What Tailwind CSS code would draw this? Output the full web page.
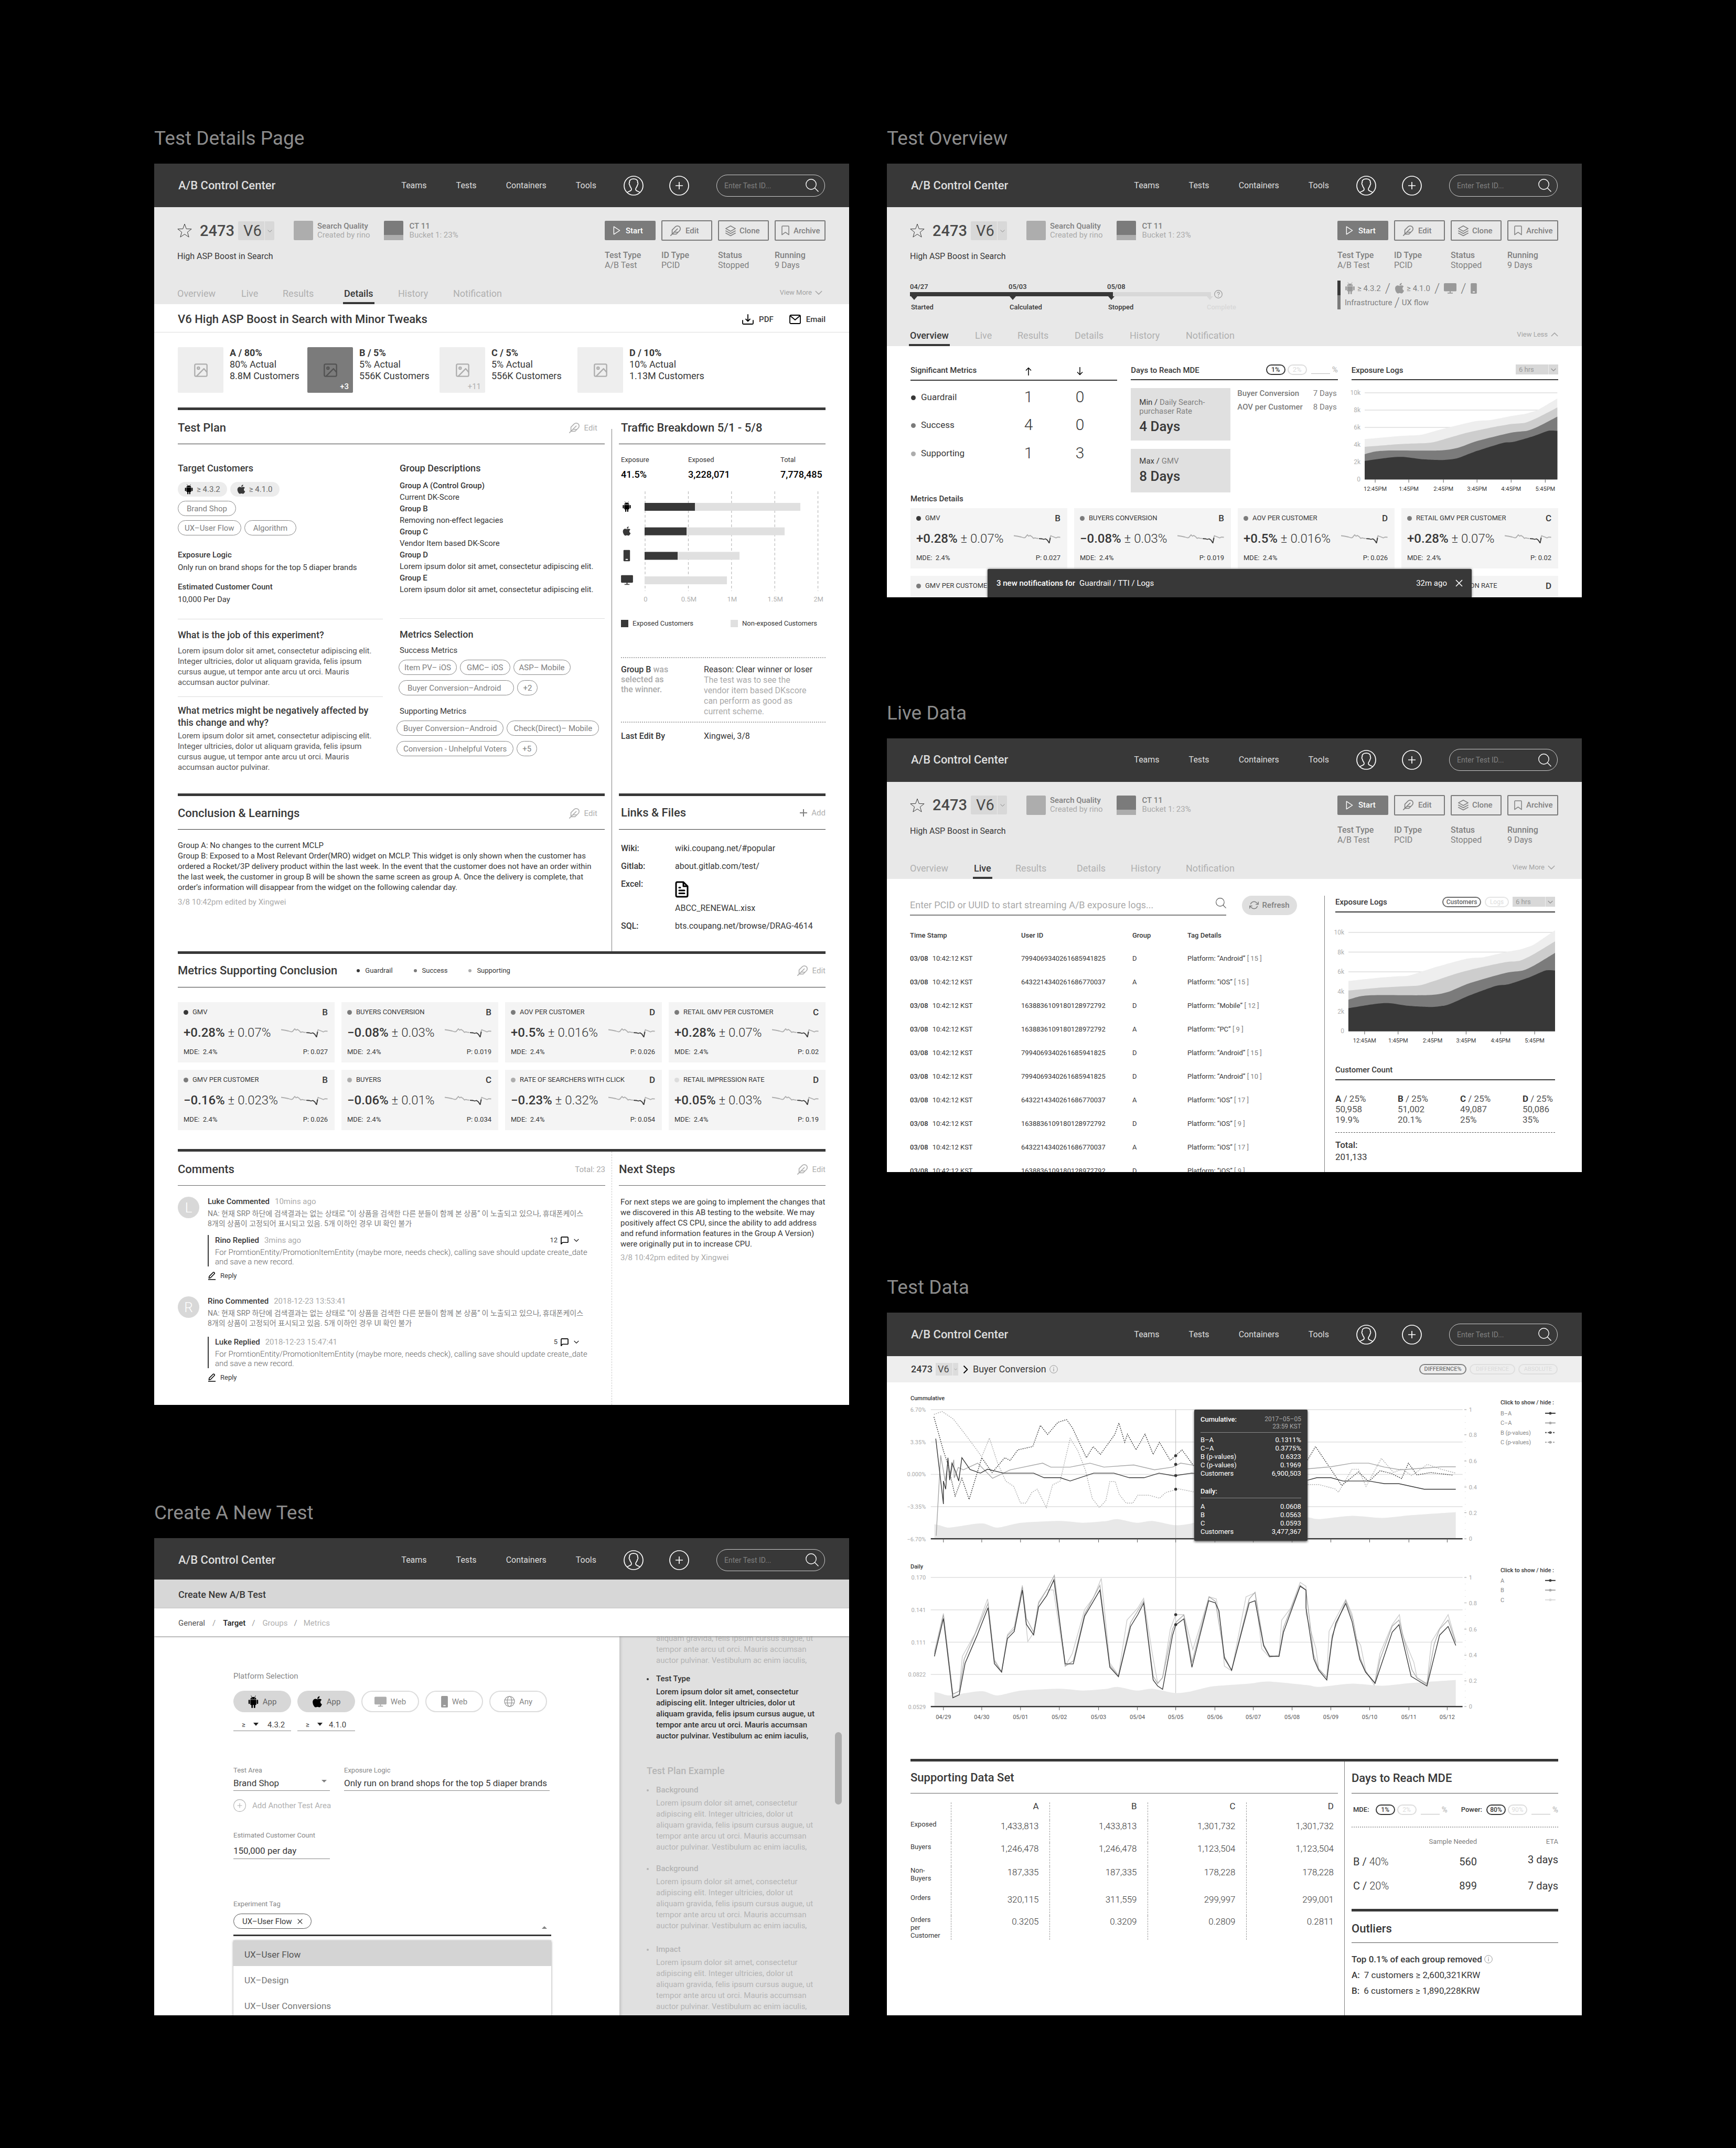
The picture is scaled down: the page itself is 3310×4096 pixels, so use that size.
<!DOCTYPE html>
<html lang="en">
<head>
<meta charset="utf-8">
<meta name="viewport" content="width=device-width, initial-scale=1">
<title>A/B Control Center – screens</title>
<script src="https://cdn.jsdelivr.net/npm/@tailwindcss/browser@4"></script>
</head>
<body class="min-h-screen bg-black font-['Roboto','Noto_Sans_CJK_KR',sans-serif] text-[#383838] text-[15px] leading-5">

<!-- Icon sprite -->
<svg class="hidden" aria-hidden="true">
  <symbol id="i-user" viewBox="0 0 38 38"><g fill="none" stroke="currentColor" stroke-width="1.7"><circle cx="19" cy="19" r="18"/><path d="M6.500 32.200C8.500 30 13.800 29.600 14.800 27.200c.4-1.200.1-2.800-.5-3.700C12.600 21.300 11.800 19.400 11.500 17.500c-1.300-.8-1.200-4-.3-4.200C10.600 8.200 14 6.200 19 6.200s8.400 2 7.800 7.100c.9.2 1 3.400-.3 4.200-.3 1.900-1.100 3.800-2.800 6-.6.9-.9 2.500-.5 3.700 1 2.400 6.300 2.800 8.300 5"/></g></symbol>
  <symbol id="i-plus-circle" viewBox="0 0 38 38"><g fill="none" stroke="currentColor" stroke-width="1.7"><circle cx="19" cy="19" r="18"/><path d="M19 12v14M12 19h14"/></g></symbol>
  <symbol id="i-search" viewBox="0 0 25 25"><g fill="none" stroke="currentColor" stroke-width="1.400"><circle cx="10.500" cy="10.500" r="9.700"/><path d="M17.500 17.500l7 7"/></g></symbol>
  <symbol id="i-star" viewBox="0 0 28 27"><path fill="none" stroke="currentColor" stroke-width="1" d="M14 1.200l3.300 9.200 9.800.3-7.700 6 2.700 9.400L14 20.600l-8.100 5.500 2.700-9.400-7.700-6 9.800-.3z"/></symbol>
  <symbol id="i-chevron" viewBox="0 0 16 9"><path fill="none" stroke="currentColor" stroke-width="1.800" d="M1 1l7 7 7-7"/></symbol>
  <symbol id="i-play" viewBox="0 0 14 18"><path fill="none" stroke="currentColor" stroke-width="1.500" stroke-linejoin="round" d="M1 1.200v15.600L13 9z"/></symbol>
  <symbol id="i-feather" viewBox="0 0 24 24"><path fill="none" stroke="currentColor" stroke-width="1.800" stroke-linecap="round" stroke-linejoin="round" d="M20.240 12.240a6 6 0 0 0-8.490-8.490L5 10.500V19h8.500zM16 8L2 22M17.500 15H9"/></symbol>
  <symbol id="i-layers" viewBox="0 0 24 24"><path fill="none" stroke="currentColor" stroke-width="1.800" stroke-linejoin="round" stroke-linecap="round" d="M12 2L2 7.500 12 13l10-5.500zM2 12.300l10 5.400 10-5.400M2 17l10 5.400L22 17"/></symbol>
  <symbol id="i-bookmark" viewBox="0 0 16 20"><path fill="none" stroke="currentColor" stroke-width="1.600" stroke-linejoin="round" d="M1 18.700V2.500A1.500 1.500 0 0 1 2.500 1h11A1.500 1.500 0 0 1 15 2.500v16.200l-7-5z"/></symbol>
  <symbol id="i-download" viewBox="0 0 22 20"><path fill="none" stroke="currentColor" stroke-width="1.800" stroke-linecap="round" stroke-linejoin="round" d="M1 12v5.500A1.500 1.500 0 0 0 2.500 19h17a1.500 1.500 0 0 0 1.500-1.500V12M11 1v12M7 9.500l4 4 4-4"/></symbol>
  <symbol id="i-mail" viewBox="0 0 22 18"><g fill="none" stroke="currentColor" stroke-width="1.800" stroke-linejoin="round"><rect x="1" y="1" width="20" height="16" rx="2"/><path d="M1.500 2L11 10l9.500-8"/></g></symbol>
  <symbol id="i-image" viewBox="0 0 24 24"><g fill="none" stroke="currentColor" stroke-width="2" stroke-linejoin="round"><rect x="2" y="2" width="20" height="20" rx="2"/><circle cx="8" cy="8.500" r="1.800"/><path d="M22 15.500l-5-6L5 21.800"/></g></symbol>
  <symbol id="i-android" viewBox="0 0 20 24"><g fill="currentColor"><path d="M4.300 7.500C4.500 4.900 6.700 2.900 10 2.900s5.500 2 5.700 4.600z"/><path d="M5.600.3l1.600 3M14.400.3l-1.600 3" stroke="currentColor" stroke-width=".8" fill="none"/><path d="M4.300 8.300h11.400v8.700a1.200 1.200 0 0 1-1.200 1.200h-9A1.200 1.200 0 0 1 4.300 17z"/><rect x=".8" y="8.300" width="2.700" height="8" rx="1.300"/><rect x="16.500" y="8.300" width="2.700" height="8" rx="1.300"/><rect x="6.300" y="16" width="2.800" height="8" rx="1.300"/><rect x="10.900" y="16" width="2.800" height="8" rx="1.300"/></g><circle cx="7.500" cy="5.300" r=".55" fill="#fff"/><circle cx="12.500" cy="5.300" r=".55" fill="#fff"/></symbol>
  <symbol id="i-apple" viewBox="0 0 384 512"><path fill="currentColor" d="M318.700 268.700c-.2-36.700 16.400-64.400 50-84.800-18.800-26.900-47.200-41.700-84.700-44.600-35.500-2.800-74.300 20.700-88.500 20.700-15 0-49.400-19.700-76.400-19.700C63.300 141.200 4 184.800 4 273.500q0 39.300 14.400 81.200c12.800 36.700 59 126.700 107.200 125.200 25.200-.6 43-17.900 75.800-17.900 31.800 0 48.300 17.900 76.400 17.900 48.600-.7 90.400-82.500 102.600-119.300-65.200-30.700-61.700-90-61.700-91.900zm-56.600-164.200c27.300-32.400 24.800-61.900 24-72.500-24.100 1.400-52 16.400-67.900 34.900-17.500 19.800-27.800 44.300-25.600 71.900 26.100 2 49.900-11.400 69.500-34.300z"/></symbol>
  <symbol id="i-phone" viewBox="0 0 14 24"><rect width="14" height="24" rx="2" fill="currentColor"/><rect x="4.500" y="19" width="5" height="2" rx=".6" fill="#fff"/></symbol>
  <symbol id="i-monitor" viewBox="0 0 24 20"><g fill="currentColor"><rect width="24" height="15.500" rx="1.800"/><rect x="11" y="15" width="2" height="3.500"/><rect x="7" y="18" width="10" height="1.800"/></g></symbol>
  <symbol id="i-globe" viewBox="0 0 22 22"><g fill="none" stroke="currentColor" stroke-width="1.400"><circle cx="11" cy="11" r="10"/><ellipse cx="11" cy="11" rx="4.500" ry="10"/><path d="M1.500 8h19M1.500 14h19"/></g></symbol>
  <symbol id="i-file" viewBox="0 0 26 32"><path fill="none" stroke="currentColor" stroke-width="3" stroke-linejoin="round" stroke-linecap="round" d="M16 2H4.500A2.500 2.500 0 0 0 2 4.500v23A2.500 2.500 0 0 0 4.500 30h17a2.500 2.500 0 0 0 2.500-2.500V10zM16 2v8h8M8 12.500h2M8 18h10M8 23.500h10"/></symbol>
  <symbol id="i-plus" viewBox="0 0 14 14"><path stroke="currentColor" stroke-width="2" d="M7 0v14M0 7h14"/></symbol>
  <symbol id="i-chat" viewBox="0 0 16 16"><path fill="none" stroke="currentColor" stroke-width="1.800" stroke-linejoin="round" d="M1 15V2.200A1.200 1.200 0 0 1 2.200 1h11.600A1.200 1.200 0 0 1 15 2.200v8.600a1.200 1.200 0 0 1-1.200 1.200H4z"/></symbol>
  <symbol id="i-pencil" viewBox="0 0 16 17"><path fill="none" stroke="currentColor" stroke-width="1.600" stroke-linejoin="round" d="M2 13l.6-3.600L10.400 1.500a1.500 1.500 0 0 1 2.100 0l.6.6a1.500 1.500 0 0 1 0 2.100L5.300 12.200zM.5 16h15"/></symbol>
  <symbol id="i-refresh" viewBox="0 0 24 24"><path fill="none" stroke="currentColor" stroke-width="2" stroke-linecap="round" stroke-linejoin="round" d="M23 4v6h-6M1 20v-6h6M3.510 9a9 9 0 0 1 14.850-3.360L23 10M1 14l4.640 4.360A9 9 0 0 0 20.490 15"/></symbol>
  <symbol id="i-up" viewBox="0 0 12 16"><path fill="none" stroke="currentColor" stroke-width="1.500" d="M6 16V1.500M1 6.500l5-5 5 5"/></symbol>
  <symbol id="i-close" viewBox="0 0 14 14"><path stroke="currentColor" stroke-width="1.600" d="M1 1l12 12M13 1L1 13"/></symbol>
  <symbol id="i-info" viewBox="0 0 16 16"><circle cx="8" cy="8" r="7.300" fill="none" stroke="currentColor"/><path stroke="currentColor" stroke-width="1.200" d="M8 6.500v5.500M8 3.700v1.500"/></symbol>
  <symbol id="i-help" viewBox="0 0 16 16"><circle cx="8" cy="8" r="7.300" fill="none" stroke="currentColor" stroke-width="1.200"/><path fill="none" stroke="currentColor" stroke-width="1.300" d="M5.800 6.200C5.800 3.400 10.300 3.500 10.200 6.200 10.200 7.800 8 7.800 8 9.600M8 11v1.500"/></symbol>
  <symbol id="i-spark" viewBox="0 0 89 18"><g fill="none" stroke-linejoin="round"><path stroke="#adadad" stroke-width="1.800" d="M0 3.500l7 1 7 1.500 5 1.500 2.500-.3L26 1.800l2.500 2.700 2.500-1.500 4 2.800 2.500 2.800 2.500-1 3 .8 4 .5M68 11L70.500 3.500l2 1 4 1.500 4 1.800 3-1.600 5 .3"/><path stroke="#383838" stroke-width="1.800" d="M48 9.200l6 .3 3 1 3.500-1 3.500 2.500 3.500 5.500 2.200-10"/></g></symbol>
</svg>

<main class="grid min-h-screen grid-cols-2 gap-[72px] px-[294px] pt-[244px] pb-[253px]">

  <div class="flex flex-col justify-between">

    <!-- ============ Test details ============ -->
    <section class="flex flex-col gap-7">
      <h2 class="text-[37px] leading-10 text-[#8c8c8c]">Test Details Page</h2>
      <article class="bg-white">
        <div data-header></div>
        <div data-toolbar="Details"></div>

        <div class="flex h-[54px] items-center justify-between border-b border-[#dcdcdc] px-[45px] pt-1">
          <h3 class="text-[22px] font-medium">V6 High ASP Boost in Search with Minor Tweaks</h3>
          <div class="flex gap-[30px] font-medium">
            <a href="#pdf" class="flex items-center gap-2.5"><svg class="h-5 w-[22px] text-black"><use href="#i-download"/></svg>PDF</a>
            <a href="#email" class="flex items-center gap-2.5"><svg class="h-[18px] w-[22px] text-black"><use href="#i-mail"/></svg>Email</a>
          </div>
        </div>

        <div class="px-[45px]">
          <ul class="grid grid-cols-[247px_252px_263px_auto] py-7 text-[18px] leading-[22px]">
            <li class="flex gap-3"><span class="flex size-[87px] items-center justify-center rounded-xs bg-[#eeeeee]"><svg class="size-7 text-[#adadad]"><use href="#i-image"/></svg></span><div><b>A / 80%</b><br>80% Actual<br>8.8M Customers</div></li>
            <li class="flex gap-3"><span class="relative flex size-[87px] items-center justify-center rounded-xs bg-[#7b7b7b]"><svg class="size-7 text-[#525252]"><use href="#i-image"/></svg><small class="absolute right-2 bottom-1 text-[15px] font-medium leading-4 text-white">+3</small></span><div><b>B / 5%</b><br>5% Actual<br>556K Customers</div></li>
            <li class="flex gap-3"><span class="relative flex size-[87px] items-center justify-center rounded-xs bg-[#eeeeee]"><svg class="size-7 text-[#adadad]"><use href="#i-image"/></svg><small class="absolute right-2 bottom-1 text-[15px] leading-4 text-[#b0b0b0]">+11</small></span><div><b>C / 5%</b><br>5% Actual<br>556K Customers</div></li>
            <li class="flex gap-3"><span class="flex size-[87px] items-center justify-center rounded-xs bg-[#eeeeee]"><svg class="size-7 text-[#adadad]"><use href="#i-image"/></svg></span><div><b>D / 10%</b><br>10% Actual<br>1.13M Customers</div></li>
          </ul>

          <div class="h-[5px] bg-[#383838]"></div>

          <div class="grid grid-cols-[1fr_1px_394px] gap-x-[13px]">
            <!-- Test plan -->
            <section class="pb-10">
              <div class="flex h-[65px] items-center justify-between border-b border-[#383838] pt-1 pr-3.5">
                <h3 class="text-[22px] font-medium">Test Plan</h3>
                <a href="#edit-plan" class="flex items-center gap-2 text-[#b0b0b0]"><svg class="size-[22px]"><use href="#i-feather"/></svg>Edit</a>
              </div>
              <div class="grid grid-cols-2 gap-8 pt-[34px]">
                <div>
                  <h4 class="text-[18px] leading-6 font-medium">Target Customers</h4>
                  <div class="mt-3.5 flex gap-1.5">
                    <span class="flex h-7 items-center gap-[7px] rounded-full bg-[#ececec] px-[13px] text-[#666]"><svg class="h-5 w-4 text-black"><use href="#i-android"/></svg>≥ 4.3.2</span>
                    <span class="flex h-7 items-center gap-[7px] rounded-full bg-[#ececec] px-[13px] text-[#666]"><svg class="h-5 w-4 text-[#383838]"><use href="#i-apple"/></svg>≥ 4.1.0</span>
                  </div>
                  <div class="mt-2 flex"><span class="flex h-[29px] items-center rounded-full border border-[#888] px-4 text-[#808080]">Brand Shop</span></div>
                  <div class="mt-2 flex gap-1.5"><span class="flex h-[29px] items-center rounded-full border border-[#888] px-3 text-[#808080]">UX–User Flow</span><span class="flex h-[29px] items-center rounded-full border border-[#888] px-4 text-[#808080]">Algorithm</span></div>
                  <h5 class="mt-[27px] font-medium">Exposure Logic</h5>
                  <p class="mt-1">Only run on brand shops for the top 5 diaper brands</p>
                  <h5 class="mt-[17px] font-medium">Estimated Customer Count</h5>
                  <p class="mt-1">10,000 Per Day</p>
                  <h4 class="mt-[27px] border-t border-[#dcdcdc] pt-[18px] text-[18px] leading-6 font-medium">What is the job of this experiment?</h4>
                  <p class="mt-2 text-[#555]">Lorem ipsum dolor sit amet, consectetur adipiscing elit.<br>Integer ultricies, dolor ut aliquam gravida, felis ipsum<br>cursus augue, ut tempor ante arcu ut orci. Mauris<br>accumsan auctor pulvinar.</p>
                  <h4 class="mt-[17px] border-t border-[#dcdcdc] pt-3.5 text-[18px] leading-[23px] font-medium">What metrics might be negatively affected by<br>this change and why?</h4>
                  <p class="mt-1 text-[#555]">Lorem ipsum dolor sit amet, consectetur adipiscing elit.<br>Integer ultricies, dolor ut aliquam gravida, felis ipsum<br>cursus augue, ut tempor ante arcu ut orci. Mauris<br>accumsan auctor pulvinar.</p>
                </div>
                <div>
                  <h4 class="text-[18px] leading-6 font-medium">Group Descriptions</h4>
                  <dl class="mt-2.5 leading-[22px]">
                    <dt class="font-medium">Group A (Control Group)</dt><dd>Current DK-Score</dd>
                    <dt class="font-medium">Group B</dt><dd>Removing non-effect legacies</dd>
                    <dt class="font-medium">Group C</dt><dd>Vendor Item based DK-Score</dd>
                    <dt class="font-medium">Group D</dt><dd class="whitespace-nowrap">Lorem ipsum dolor sit amet, consectetur adipiscing elit.</dd>
                    <dt class="font-medium">Group E</dt><dd class="whitespace-nowrap">Lorem ipsum dolor sit amet, consectetur adipiscing elit.</dd>
                  </dl>
                  <h4 class="mt-11 border-t border-[#dcdcdc] pt-[18px] text-[18px] leading-6 font-medium">Metrics Selection</h4>
                  <h5 class="mt-2">Success Metrics</h5>
                  <div class="mt-2 -ml-0.5 flex gap-1.5 text-[#808080]"><span class="flex h-[29px] items-center rounded-full border border-[#888] px-2.5">Item PV– iOS</span><span class="flex h-[29px] items-center rounded-full border border-[#888] px-3">GMC– iOS</span><span class="flex h-[29px] items-center rounded-full border border-[#888] px-2.5">ASP– Mobile</span></div>
                  <div class="mt-2.5 -ml-0.5 flex gap-1.5 text-[#808080]"><span class="flex h-[29px] items-center rounded-full border border-[#888] pr-6 pl-4">Buyer Conversion–Android</span><span class="flex h-[29px] items-center rounded-full border border-[#888] px-2.5">+2</span></div>
                  <h5 class="mt-5">Supporting Metrics</h5>
                  <div class="mt-2 -ml-1.5 flex gap-1.5 text-[#808080]"><span class="flex h-[29px] items-center rounded-full border border-[#888] px-3">Buyer Conversion–Android</span><span class="flex h-[29px] items-center rounded-full border border-[#888] px-3">Check(Direct)– Mobile</span></div>
                  <div class="mt-2.5 -ml-1.5 flex gap-1.5 text-[#808080]"><span class="flex h-[29px] items-center rounded-full border border-[#888] px-3">Conversion - Unhelpful Voters</span><span class="flex h-[29px] items-center rounded-full border border-[#888] px-2.5">+5</span></div>
                </div>
              </div>
            </section>

            <div class="row-span-2 mt-9 bg-[#808080]"></div>

            <!-- Traffic -->
            <section>
              <div class="flex h-[65px] items-center border-b border-[#383838] pt-1 pl-1"><h3 class="text-[22px] font-medium">Traffic Breakdown 5/1 - 5/8</h3></div>
              <div class="pl-1">
                <dl class="grid grid-cols-[128px_176px_auto] pt-5 text-black">
                  <div><dt class="text-[13px] text-[#383838]">Exposure</dt><dd class="mt-1.5 text-[18px] leading-6 font-medium">41.5%</dd></div>
                  <div><dt class="text-[13px] text-[#383838]">Exposed</dt><dd class="mt-1.5 text-[18px] leading-6 font-medium">3,228,071</dd></div>
                  <div><dt class="text-[13px] text-[#383838]">Total</dt><dd class="mt-1.5 text-[18px] leading-6 font-medium">7,778,485</dd></div>
                </dl>
                <div class="mt-5" id="traffic"></div>
                <div class="mt-7 flex justify-between pr-4 text-[13px]">
                  <span class="flex items-center gap-2"><i class="size-3.5 bg-[#383838]"></i>Exposed Customers</span>
                  <span class="flex items-center gap-2"><i class="size-3.5 bg-[#e0e0e0]"></i>Non-exposed Customers</span>
                </div>
                <div class="mt-[54px] grid grid-cols-[158px_1fr] border-y-2 border-dotted border-[#aaa] pt-3 pb-[9px] text-[16px]">
                  <p class="leading-[19px] font-medium text-[#aaa]"><span class="text-[#383838]">Group B</span> was<br>selected as<br>the winner.</p>
                  <p class="text-[#aaa]"><span class="text-[#383838]">Reason: Clear winner or loser</span><br>The test was to see the<br>vendor item based DKscore<br>can perform as good as<br>current scheme.</p>
                </div>
                <div class="mt-3.5 grid grid-cols-[158px_1fr] text-[16px] leading-6"><b class="font-medium">Last Edit By</b><span>Xingwei, 3/8</span></div>
              </div>
            </section>

            <!-- Conclusion -->
            <section class="border-t-[5px] border-[#383838]">
              <div class="flex h-16 items-center justify-between border-b border-[#383838] pt-0.5 pr-3.5">
                <h3 class="text-[22px] font-medium">Conclusion &amp; Learnings</h3>
                <a href="#edit-conclusion" class="flex items-center gap-2 text-[#b0b0b0]"><svg class="size-[22px]"><use href="#i-feather"/></svg>Edit</a>
              </div>
              <p class="pt-5">Group A: No changes to the current MCLP<br>Group B: Exposed to a Most Relevant Order(MRO) widget on MCLP. This widget is only shown when the customer has<br>ordered a Rocket/3P delivery product within the last week. In the event that the customer does not have an order within<br>the last week, the customer in group B will be shown the same screen as group A. Once the delivery is complete, that<br>order’s information will disappear from the widget on the following calendar day.</p>
              <p class="mt-2 text-[#aaa]">3/8 10:42pm edited by Xingwei</p>
            </section>

            <!-- Links -->
            <section class="border-t-[5px] border-[#383838]">
              <div class="flex h-16 items-center justify-between border-b border-[#383838] pl-1">
                <h3 class="text-[22px] font-medium">Links &amp; Files</h3>
                <a href="#add-link" class="flex items-center gap-2 text-[#b0b0b0]"><svg class="size-3.5 text-[#808080]"><use href="#i-plus"/></svg>Add</a>
              </div>
              <dl class="grid grid-cols-[103px_1fr] gap-y-2.5 pt-6 pb-9 pl-1 text-[16px] leading-6">
                <dt class="font-medium">Wiki:</dt><dd><a href="#wiki">wiki.coupang.net/#popular</a></dd>
                <dt class="font-medium">Gitlab:</dt><dd><a href="#gitlab">about.gitlab.com/test/</a></dd>
                <dt class="font-medium">Excel:</dt><dd><a href="#excel"><svg class="mt-1.5 mb-2 h-8 w-[26px] text-black"><use href="#i-file"/></svg>ABCC_RENEWAL.xisx</a></dd>
                <dt class="font-medium">SQL:</dt><dd><a href="#sql">bts.coupang.net/browse/DRAG-4614</a></dd>
              </dl>
            </section>
          </div>

          <!-- Supporting metrics -->
          <section class="border-t-[5px] border-[#383838]">
            <div class="flex h-16 items-center border-b border-[#383838]">
              <h3 class="text-[22px] font-medium">Metrics Supporting Conclusion</h3>
              <ul class="flex gap-10 pl-[37px] text-[13px]">
                <li class="flex items-center gap-2.5"><i class="size-1.5 rounded-full bg-[#383838]"></i>Guardrail</li>
                <li class="flex items-center gap-2.5"><i class="size-1.5 rounded-full bg-[#7b7b7b]"></i>Success</li>
                <li class="flex items-center gap-2.5"><i class="size-1.5 rounded-full bg-[#adadad]"></i>Supporting</li>
              </ul>
              <a href="#edit-metrics" class="ml-auto flex items-center gap-2 text-[#b0b0b0]"><svg class="size-[22px]"><use href="#i-feather"/></svg>Edit</a>
            </div>
            <div data-metrics class="mt-7 mb-9 grid grid-cols-4 gap-x-[13px] gap-y-3.5"></div>
          </section>

          <!-- Comments -->
          <div class="grid grid-cols-[minmax(0,1fr)_408px] gap-x-3 border-t-[5px] border-[#383838]">
            <section class="pb-11">
              <div class="flex h-[65px] items-center justify-between border-b border-[#666] pt-1">
                <h3 class="text-[22px] font-medium">Comments</h3><span class="text-[#aaa]">Total: 23</span>
              </div>
              <div id="comments" class="flex flex-col gap-[30px] pt-5"></div>
            </section>
            <section class="border-l border-dashed border-[#ccc] pl-[13px]">
              <div class="flex h-[65px] items-center justify-between border-b border-[#666] pt-1">
                <h3 class="text-[22px] font-medium">Next Steps</h3>
                <a href="#edit-steps" class="flex items-center gap-2 text-[#b0b0b0]"><svg class="size-[22px]"><use href="#i-feather"/></svg>Edit</a>
              </div>
              <p class="pt-[21px] pl-[3px] whitespace-nowrap">For next steps we are going to implement the changes that<br>we discovered in this AB testing to the website. We may<br>positively affect CS CPU, since the ability to add address<br>and refund information features in the Group A Version)<br>were originally put in to increase CPU.</p>
              <p class="mt-1.5 pl-[3px] text-[#aaa]">3/8 10:42pm edited by Xingwei</p>
            </section>
          </div>
        </div>
      </article>
    </section>

    <!-- ============ Create a new test ============ -->
    <section class="flex flex-col gap-7">
      <h2 class="text-[37px] leading-10 text-[#8c8c8c]">Create A New Test</h2>
      <article class="flex h-[910px] flex-col overflow-hidden bg-white">
        <div data-header></div>
        <div class="-mt-1 flex h-[55px] shrink-0 items-center bg-[#d7d7d7] px-[46px] pt-0.5"><h3 class="text-[18px] font-medium">Create New A/B Test</h3></div>
        <nav class="z-10 flex h-[53px] shrink-0 items-center bg-white px-[46px] pt-0.5 shadow-[0_1px_3px_#888]" aria-label="Steps">
          <a href="#general" class="text-[#555]">General</a><span class="px-3.5 text-[#999]">/</span>
          <a href="#target" class="font-medium text-[#222]">Target</a><span class="pr-3.5 pl-3 text-[#999]">/</span>
          <a href="#groups" class="text-[#b0b0b0]">Groups</a><span class="px-3 text-[#999]">/</span>
          <a href="#metrics" class="text-[#b0b0b0]">Metrics</a>
        </nav>
        <div class="grid min-h-0 flex-1 grid-cols-[1fr_438px]">
          <form class="pt-[66px] pl-[151px]">
            <fieldset>
              <legend class="text-[#888]">Platform Selection</legend>
              <div class="mt-[18px] flex gap-3 text-[#666]">
                <button type="button" class="flex h-[41px] w-[110px] items-center justify-center gap-2 rounded-full bg-[#d7d7d7]"><svg class="h-6 w-5 text-black"><use href="#i-android"/></svg>App</button>
                <button type="button" class="flex h-[41px] w-[110px] items-center justify-center gap-2 rounded-full bg-[#d7d7d7]"><svg class="h-6 w-5 text-black"><use href="#i-apple"/></svg>App</button>
                <button type="button" class="flex h-[41px] w-[110px] items-center justify-center gap-2 rounded-full border-2 border-[#dcdcdc] text-[#888]"><svg class="h-5 w-[23px] text-[#adadad]"><use href="#i-monitor"/></svg>Web</button>
                <button type="button" class="flex h-[41px] w-[110px] items-center justify-center gap-2 rounded-full border-2 border-[#dcdcdc] text-[#888]"><svg class="h-[22px] w-[13px] text-[#999]"><use href="#i-phone"/></svg>Web</button>
                <button type="button" class="flex h-[41px] w-[110px] items-center justify-center gap-2 rounded-full border-2 border-[#dcdcdc] text-[#888]"><svg class="size-[21px] text-[#999]"><use href="#i-globe"/></svg>Any</button>
              </div>
              <div class="mt-3 flex gap-3">
                <div class="relative flex h-6 w-[110px] border-b border-[#888]"><select aria-label="Android comparison" class="w-[60px] appearance-none pl-4 text-[13px]"><option>≥</option></select><span class="pointer-events-none absolute top-2 left-[38px] border-x-[5px] border-t-[6px] border-x-transparent border-t-[#222]"></span><input aria-label="Android version" value="4.3.2" class="w-[45px] pl-[5px] text-[#444]"></div>
                <div class="relative flex h-6 w-[110px] border-b border-[#888]"><select aria-label="iOS comparison" class="w-[60px] appearance-none pl-4 text-[13px]"><option>≥</option></select><span class="pointer-events-none absolute top-2 left-[38px] border-x-[5px] border-t-[6px] border-x-transparent border-t-[#222]"></span><input aria-label="iOS version" value="4.1.0" class="w-[45px] text-[#444]"></div>
              </div>
            </fieldset>
            <div class="mt-[65px] flex gap-[27px]">
              <div class="relative w-[184px]"><label for="area" class="block text-[13px] text-[#888]">Test Area</label><select id="area" class="h-[29px] w-full appearance-none border-b border-[#888] text-[17px]"><option>Brand Shop</option></select><span class="pointer-events-none absolute right-1.5 bottom-4 border-x-[5px] border-t-[5px] border-x-transparent border-t-[#808080]"></span></div>
              <div class="w-[392px]"><label for="logic" class="block text-[13px] text-[#888]">Exposure Logic</label><input id="logic" value="Only run on brand shops for the top 5 diaper brands" class="h-[29px] w-full border-b border-[#888] text-[17px]"></div>
            </div>
            <button type="button" class="mt-4 flex items-center gap-3 text-[#b0b0b0]"><svg class="size-6"><use href="#i-plus-circle"/></svg>Add Another Test Area</button>
            <div class="mt-[35px] w-[184px]"><label for="count" class="block text-[13px] text-[#888]">Estimated Customer Count</label><input id="count" value="150,000 per day" class="mt-1 h-[31px] w-full border-b border-[#888] text-[17px]"></div>
            <div class="mt-[76px] w-[606px]">
              <label for="tag" class="block text-[13px] text-[#888]">Experiment Tag</label>
              <div class="mt-2 flex h-[43px] items-start border-b-3 border-[#383838]">
                <span class="flex h-[29px] items-center gap-2.5 rounded-full border border-[#555] px-4">UX–User Flow<button type="button" aria-label="Remove UX–User Flow"><svg class="size-2.5 text-[#222]"><use href="#i-close"/></svg></button></span>
                <input id="tag" class="h-[29px] min-w-0 flex-1"><span class="mt-6 mr-2 border-x-[5px] border-b-[5px] border-x-transparent border-b-[#808080]"></span>
              </div>
              <ul role="listbox" class="mt-2 h-[160px] rounded-xs bg-white text-[17px] text-[#777] shadow-[0_1px_4px_#999]">
                <li role="option" aria-selected="true" class="flex h-[49px] items-center bg-[#d4d4d4] px-[21px] pt-1 text-[#555]">UX–User Flow</li>
                <li role="option" class="flex h-[49px] items-center px-[21px] pt-1">UX–Design</li>
                <li role="option" class="flex h-[49px] items-center px-[21px] pt-1">UX–User Conversions</li>
              </ul>
            </div>
          </form>
          <aside class="relative overflow-hidden bg-[#e0e0e0] pl-[52px] leading-[21px] text-[#b4b4b4] shadow-[inset_3px_0_4px_#c4c4c4]">
            <p class="-mt-1.5 pl-[18px]">aliquam gravida, felis ipsum cursus augue, ut<br>tempor ante arcu ut orci. Mauris accumsan<br>auctor pulvinar. Vestibulum ac enim iaculis,</p>
            <div id="hints"></div>
            <div class="absolute top-[183px] right-3.5 h-[138px] w-[13px] rounded-full bg-[#adadad]"></div>
          </aside>
        </div>
      </article>
    </section>
  </div>

  <div class="flex flex-col justify-between">

    <!-- ============ Overview ============ -->
    <section class="flex flex-col gap-7">
      <h2 class="text-[37px] leading-10 text-[#8c8c8c]">Test Overview</h2>
      <article class="relative h-[827px] overflow-hidden bg-white">
        <div data-header></div>
        <div data-toolbar="Overview"></div>
        <div class="px-[45px]">
          <div class="grid grid-cols-3 gap-x-[26px] pt-[35px]">
            <table class="h-[192px] w-full table-fixed">
              <colgroup><col class="w-[176px]"><col class="w-[98px]"><col class="w-[98px]"><col></colgroup>
              <thead><tr class="h-[30px] border-b-2 border-[#383838]"><th scope="col" class="pb-2 text-left align-bottom font-medium">Significant Metrics</th><th scope="col" class="pb-1" aria-label="Up"><svg class="mx-auto h-4 w-3 text-black"><use href="#i-up"/></svg></th><th scope="col" class="pb-1" aria-label="Down"><svg class="mx-auto h-4 w-3 rotate-180 text-black"><use href="#i-up"/></svg></th><td></td></tr></thead>
              <tbody class="text-center text-[30px] font-light [&_td]:pt-2 [&_th]:pt-2">
                <tr class="h-[54px]"><th scope="row" class="text-left text-[17px] font-normal"><i class="mr-2.5 ml-px inline-block size-[9px] rounded-full bg-[#383838]"></i>Guardrail</th><td>1</td><td>0</td><td></td></tr>
                <tr class="h-[54px]"><th scope="row" class="text-left text-[17px] font-normal"><i class="mr-2.5 ml-px inline-block size-[9px] rounded-full bg-[#7b7b7b]"></i>Success</th><td>4</td><td>0</td><td></td></tr>
                <tr class="h-[54px]"><th scope="row" class="text-left text-[17px] font-normal"><i class="mr-2.5 ml-px inline-block size-[9px] rounded-full bg-[#adadad]"></i>Supporting</th><td>1</td><td>3</td><td></td></tr>
              </tbody>
            </table>
            <section>
              <div class="flex h-[30px] items-start gap-1 border-b-2 border-[#383838]">
                <h4 class="mr-auto pt-px font-medium">Days to Reach MDE</h4>
                <button type="button" class="h-5 w-[37px] rounded-full border-2 border-[#383838] text-[13px] leading-4 font-medium">1%</button>
                <button type="button" class="h-5 w-[37px] rounded-full border-2 border-[#dcdcdc] text-[13px] leading-4 text-[#dcdcdc]">2%</button>
                <input aria-label="Custom MDE" class="ml-1 h-[18px] w-[36px] border-b border-[#bbb]"><span class="text-[#b0b0b0]">%</span>
              </div>
              <div class="grid grid-cols-[190px_1fr] gap-x-[13px] pt-[15px]">
                <div class="flex flex-col gap-4">
                  <div class="h-[100px] bg-[#e0e0e0] px-4 pt-[19px] leading-[17px] text-[#808080]"><span class="text-[#383838]">Min /</span> Daily Search-<br>purchaser Rate<p class="pt-1 text-[26px] leading-8 font-medium text-[#383838]">4 Days</p></div>
                  <div class="h-[83px] bg-[#e0e0e0] px-4 pt-[15px] leading-[17px] text-[#808080]"><span class="text-[#383838]">Max /</span> GMV<p class="pt-1 text-[26px] leading-8 font-medium text-[#383838]">8 Days</p></div>
                </div>
                <dl class="grid grid-cols-[1fr_auto] content-start gap-y-1.5 pr-0.5 text-[#7b7b7b]"><dt class="font-medium">Buyer Conversion</dt><dd>7 Days</dd><dt class="font-medium">AOV per Customer</dt><dd>8 Days</dd></dl>
              </div>
            </section>
            <section>
              <div class="flex h-[30px] items-start justify-between border-b-2 border-[#383838]">
                <h4 class="pt-px font-medium">Exposure Logs</h4>
                <div class="relative"><select aria-label="Range" class="block h-[19px] w-[81px] appearance-none bg-[#d8d8d8] pl-1.5 text-[13px] leading-[19px] text-[#999]"><option>6 hrs</option></select><svg class="pointer-events-none absolute top-[7px] right-1 h-1.5 w-2.5 text-[#888]"><use href="#i-chevron"/></svg><i class="absolute top-0 right-[18px] h-full w-px bg-[#eee]"></i></div>
              </div>
              <div id="chart-overview"></div>
            </section>
          </div>
          <h4 class="pt-0.5 pb-2 font-medium">Metrics Details</h4>
          <div data-metrics class="grid grid-cols-4 gap-x-[13px] gap-y-3.5"></div>
        </div>
        <div role="status" class="absolute right-[210px] bottom-0 left-[192px] flex h-[54px] items-center rounded-t-xs bg-[#383838] px-[17px] text-white shadow-[0_0_4px_#666]"><b class="mr-2 font-medium">3 new notifications for</b>Guardrail / TTI / Logs<span class="mr-4 ml-auto">32m ago</span><button type="button" aria-label="Dismiss"><svg class="size-3.5"><use href="#i-close"/></svg></button></div>
      </article>
    </section>

    <!-- ============ Live ============ -->
    <section class="flex flex-col gap-7">
      <h2 class="text-[37px] leading-10 text-[#8c8c8c]">Live Data</h2>
      <article class="h-[827px] overflow-hidden bg-white">
        <div data-header></div>
        <div data-toolbar="Live"></div>
        <div class="grid grid-cols-[1fr_440px] pt-8 pr-[51px] pl-11">
          <div>
            <div class="flex gap-[30px]">
              <div class="flex h-[38px] w-[603px] items-center border-b-2 border-[#808080]"><input type="search" aria-label="PCID or UUID" placeholder="Enter PCID or UUID to start streaming A/B exposure logs..." class="flex-1 text-[18px] placeholder:text-[#aaa]"><svg class="mb-2 size-5 text-[#555]"><use href="#i-search"/></svg></div>
              <button type="button" class="flex h-[37px] w-[105px] items-center justify-center gap-1.5 rounded-full bg-[#dfdfdf] font-medium text-[#808080]"><svg class="size-[18px]"><use href="#i-refresh"/></svg>Refresh</button>
            </div>
            <table class="mt-4 w-full table-fixed text-left text-[13px]">
              <colgroup><col class="w-[212px]"><col class="w-[212px]"><col class="w-[105px]"><col></colgroup>
              <thead><tr class="h-[44px]"><th scope="col" class="font-medium">Time Stamp</th><th scope="col" class="font-medium">User ID</th><th scope="col" class="font-medium">Group</th><th scope="col" class="font-medium">Tag Details</th></tr></thead>
              <tbody id="log"></tbody>
            </table>
          </div>
          <aside class="h-[530px] border-l border-[#808080] pl-5">
            <div class="flex h-8 items-start gap-[7px] border-b-2 border-[#383838]">
              <h4 class="mr-auto pt-0.5 font-medium">Exposure Logs</h4>
              <button type="button" class="mt-0.5 h-5 w-[74px] rounded-full border-2 border-[#6b6b6b] text-[12px] leading-4 font-medium text-[#666]">Customers</button>
              <button type="button" class="mt-0.5 h-5 w-[46px] rounded-full border-2 border-[#e4e4e4] text-[12px] leading-4 text-[#dcdcdc]">Logs</button>
              <div class="relative mt-0.5"><select aria-label="Log range" class="block h-[19px] w-[81px] appearance-none bg-[#d8d8d8] pl-1.5 text-[13px] leading-[19px] text-[#999]"><option>6 hrs</option></select><svg class="pointer-events-none absolute top-[7px] right-1 h-1.5 w-2.5 text-[#888]"><use href="#i-chevron"/></svg><i class="absolute top-0 right-[18px] h-full w-px bg-[#eee]"></i></div>
            </div>
            <div id="chart-live"></div>
            <h4 class="mt-[35px] border-b-2 border-[#383838] pb-2 font-medium">Customer Count</h4>
            <ul class="grid grid-cols-[119px_119px_119px_auto] border-b border-dashed border-[#555] pt-[25px] pb-[14px] text-[17px] text-[#555]">
              <li><b class="text-[#383838]">A</b> / 25%<br>50,958<br>19.9%</li><li><b class="text-[#383838]">B</b> / 25%<br>51,002<br>20.1%</li><li><b class="text-[#383838]">C</b> / 25%<br>49,087<br>25%</li><li><b class="text-[#383838]">D</b> / 25%<br>50,086<br>35%</li>
            </ul>
            <p class="pt-3 text-[17px] leading-[23px]"><b class="font-medium">Total:</b><br>201,133</p>
          </aside>
        </div>
      </article>
    </section>

    <!-- ============ Test data ============ -->
    <section class="flex flex-col gap-7">
      <h2 class="text-[37px] leading-10 text-[#8c8c8c]">Test Data</h2>
      <article class="flex min-h-[1340px] flex-col bg-white">
        <div data-header></div>
        <div class="flex h-[50px] items-center gap-1.5 bg-[#eeeeee] px-[46px] text-[18px]">
          <b class="font-medium">2473</b>
          <div class="relative"><select aria-label="Version" class="block h-6 w-[43px] appearance-none bg-[#dcdcdc] pl-1 leading-6 text-[#4a4a4a]"><option>V6</option></select><svg class="pointer-events-none absolute top-2.5 right-0.5 h-1 w-1.5 text-[#888]"><use href="#i-chevron"/></svg><i class="absolute top-0 right-2.5 h-full w-px bg-[#eee]"></i></div>
          <svg class="h-[9px] w-4 -rotate-90 text-black"><use href="#i-chevron"/></svg>
          <span>Buyer Conversion</span><svg class="size-4 text-[#999]"><use href="#i-info"/></svg>
          <div class="ml-auto flex gap-1.5 text-[11px] leading-4">
            <button type="button" class="h-5 w-[90px] rounded-full border-2 border-[#808080] font-medium text-[#777]">DIFFERENCE%</button>
            <button type="button" class="h-5 w-[87px] rounded-full border-2 border-[#dedede] text-[#dadada]">DIFFERENCE</button>
            <button type="button" class="h-5 w-[75px] rounded-full border-2 border-[#dedede] text-[#dadada]">ABSOLUTE</button>
          </div>
        </div>

        <div class="relative mx-[45px] mt-[18px]">
          <div id="chart-data"></div>
          <div class="absolute top-[34px] left-[43.8%] h-[250px] w-[216px] rounded-xs bg-[#383838] px-3 pt-[11px] text-[13px] leading-[16px] text-white shadow-[0_2px_4px_#555]">
            <div class="flex justify-between border-b border-[#888] pb-1"><b class="font-medium">Cumulative:</b><span class="text-right text-[12px] leading-[14px] text-[#aaa]">2017–05–05<br>23:59 KST</span></div>
            <dl class="grid grid-cols-[1fr_auto] pt-1.5"><dt>B–A</dt><dd class="text-right">0.1311%</dd><dt>C–A</dt><dd class="text-right">0.3775%</dd><dt>B (p-values)</dt><dd class="text-right">0.6323</dd><dt>C (p-values)</dt><dd class="text-right">0.1969</dd><dt>Customers</dt><dd class="text-right">6,900,503</dd></dl>
            <b class="mt-[18px] block border-b border-[#888] pb-1 font-medium">Daily:</b>
            <dl class="grid grid-cols-[1fr_auto] pt-2"><dt>A</dt><dd class="text-right">0.0608</dd><dt>B</dt><dd class="text-right">0.0563</dd><dt>C</dt><dd class="text-right">0.0593</dd><dt>Customers</dt><dd class="text-right">3,477,367</dd></dl>
          </div>
        </div>

        <div class="mx-[45px] mt-[50px] grid flex-1 grid-cols-[minmax(0,1fr)_408px] gap-x-3 border-t-[5px] border-[#383838]">
          <section>
            <h3 class="h-[61px] border-b border-[#666] pt-[19px] text-[22px] leading-6 font-medium">Supporting Data Set</h3>
            <table class="mt-[17px] w-full table-fixed text-right text-[17px] leading-[22px] font-light">
              <colgroup><col class="w-[77px]"><col class="w-[188px]"><col class="w-[187px]"><col class="w-[188px]"><col></colgroup>
              <thead><tr class="h-[34px] align-top leading-[14px]"><td></td><th scope="col" class="border-l border-dashed border-[#999] pr-5 font-normal">A</th><th scope="col" class="border-l border-dashed border-[#999] pr-5 font-normal">B</th><th scope="col" class="border-l border-dashed border-[#999] pr-5 font-normal">C</th><th scope="col" class="border-l border-dashed border-[#999] pr-2 font-normal">D</th></tr></thead>
              <tbody id="dataset"></tbody>
            </table>
          </section>
          <section class="border-l border-[#808080] pl-[13px]">
            <h3 class="h-[61px] border-b border-[#555] pt-5 text-[22px] leading-6 font-medium">Days to Reach MDE</h3>
            <div class="flex items-center gap-1 border-b-2 border-dotted border-[#aaa] pt-[21px] pb-[22px] pl-[3px] text-[13px]">
              <b class="mr-2 font-medium">MDE:</b>
              <button type="button" class="h-5 w-[37px] rounded-full border-2 border-[#383838] text-[12px] leading-4 font-medium">1%</button>
              <button type="button" class="h-5 w-[37px] rounded-full border-2 border-[#dcdcdc] text-[12px] leading-4 text-[#dcdcdc]">2%</button>
              <input aria-label="Custom MDE" class="ml-1 h-[17px] w-[36px] border-b border-[#bbb]"><span class="text-[15px] text-[#b0b0b0]">%</span>
              <b class="mr-1 ml-auto font-medium">Power:</b>
              <button type="button" class="h-5 w-[37px] rounded-full border-2 border-[#383838] text-[12px] leading-4 font-medium">80%</button>
              <button type="button" class="h-5 w-[37px] rounded-full border-2 border-[#dcdcdc] text-[12px] leading-4 text-[#dcdcdc]">90%</button>
              <input aria-label="Custom power" class="ml-1 h-[17px] w-[36px] border-b border-[#bbb]"><span class="text-[15px] text-[#b0b0b0]">%</span>
            </div>
            <table class="mb-[13px] w-full table-fixed text-right text-[20px]">
              <colgroup><col><col class="w-[120px]"><col class="w-[155px]"></colgroup>
              <thead><tr class="h-[50px] text-[13px] text-[#808080]"><td></td><th scope="col" class="pt-1 font-normal">Sample Needed</th><th scope="col" class="pt-1 font-normal">ETA</th></tr></thead>
              <tbody>
                <tr class="h-[30px]"><th scope="row" class="pl-[3px] text-left font-normal">B / <span class="font-light">40%</span></th><td>560</td><td class="pb-2">3 days</td></tr>
                <tr class="h-[62px]"><th scope="row" class="pl-[3px] text-left font-normal">C / <span class="font-light">20%</span></th><td>899</td><td>7 days</td></tr>
              </tbody>
            </table>
            <h3 class="flex h-[65px] items-center border-t-[5px] border-b border-t-[#383838] border-b-[#555] pt-1.5 text-[22px] font-medium">Outliers</h3>
            <div class="pt-4 text-[17px] leading-[30px]"><p class="flex items-center gap-1 font-medium">Top 0.1% of each group removed<svg class="size-4 text-[#999]"><use href="#i-info"/></svg></p><p><b class="mr-2 font-medium">A:</b>7 customers ≥ 2,600,321KRW</p><p><b class="mr-2 font-medium">B:</b>6 customers ≥ 1,890,228KRW</p></div>
          </section>
        </div>
      </article>
    </section>
  </div>
</main>

<script>
const $ = (s) => document.querySelector(s);
const each = (s, fn) => document.querySelectorAll(s).forEach(fn);

/* Top bar shared by every screen */
each('[data-header]', (el) => {
  el.innerHTML = `
  <header class="flex h-[83px] items-center bg-[#383838] px-[46px] text-[#dedede]">
    <a href="#home" class="text-[22px] font-medium">A/B Control Center</a>
    <nav class="mr-[52px] ml-auto flex gap-14 text-[16px]"><a href="#teams">Teams</a><a href="#tests">Tests</a><a href="#containers">Containers</a><a href="#tools">Tools</a></nav>
    <button type="button" aria-label="Profile" class="mr-[49px] text-white"><svg class="size-[38px]"><use href="#i-user"/></svg></button>
    <button type="button" aria-label="New test" class="mr-[52px] text-white"><svg class="size-[38px]"><use href="#i-plus-circle"/></svg></button>
    <div class="flex h-[42px] w-[207px] items-center rounded-full border border-[#ccc] pr-[11px] pl-3.5"><input type="search" aria-label="Test ID" placeholder="Enter Test ID..." class="min-w-0 flex-1 text-[14px] placeholder:text-[#808080]"><svg class="size-[25px] text-white"><use href="#i-search"/></svg></div>
  </header>`;
});

/* Test summary bar with tabs; the overview screen shows it expanded */
each('[data-toolbar]', (el) => {
  const active = el.dataset.toolbar, open = active === 'Overview';
  const tab = (t) => t === active
    ? `<a href="#${t}" class="-mx-0.5 block h-8 w-fit border-b-4 border-[#383838] px-0.5 font-medium text-[#383838]">${t}</a>`
    : `<a href="#${t}" class="block">${t}</a>`;
  const mark = (d, l, muted) => `<div><span class="block h-4 text-[13px] leading-4 font-medium">${d}</span><div class="mt-0.5 h-2 ${muted ? 'bg-[#d8d8d8]' : 'bg-[#383838]'}"></div><div class="ml-0.5 w-fit border-x-[6px] border-t-[7px] border-x-transparent ${muted ? 'border-t-[#d8d8d8]' : 'border-t-[#383838]'}"></div><span class="mt-1 ml-0.5 block text-[13px] font-medium ${muted ? 'text-[#d8d8d8]' : ''}">${l}</span></div>`;
  el.innerHTML = `
  <div class="flex flex-col bg-[#e8e8e8] pt-[25px] pr-[45px] pl-11 ${open ? 'h-[265px]' : 'h-[185px]'}">
    <div class="flex h-[39px] items-center">
      <button type="button" aria-label="Favourite" class="mr-[15px]"><svg class="h-[27px] w-7"><use href="#i-star"/></svg></button>
      <b class="mr-[7px] text-[29px] font-medium text-[#4a4a4a]">2473</b>
      <div class="relative mr-[37px]"><select aria-label="Version" class="block h-9 w-[69px] appearance-none rounded-xs bg-[#d8d8d8] pl-2.5 text-[29px] leading-9 text-[#4a4a4a]"><option>V6</option></select><i class="absolute top-0 right-[18px] h-full w-px bg-[#e8e8e8]"></i><svg class="pointer-events-none absolute top-4 right-1 h-[5px] w-[9px] text-[#888]"><use href="#i-chevron"/></svg></div>
      <i class="mr-2 size-[37px] rounded-xs bg-[#adadad]"></i>
      <p class="mr-[26px] leading-[17px] text-[#aaa]"><b class="font-medium text-[#808080]">Search Quality</b><br>Created by rino</p>
      <i class="mr-3 flex size-[37px] flex-col justify-end rounded-xs bg-[#7b7b7b]"><i class="h-2.5 bg-[#adadad]"></i></i>
      <p class="leading-[17px] text-[#aaa]"><b class="font-medium text-[#808080]">CT 11</b><br>Bucket 1: 23%</p>
      <div class="ml-auto grid grid-cols-4 gap-[11px] font-medium text-[#808080]">
        <button type="button" class="flex h-[37px] w-[97px] items-center gap-2.5 self-center rounded-xs bg-[#7b7b7b] pl-4 text-white"><svg class="h-[17px] w-3.5"><use href="#i-play"/></svg>Start</button>
        <button type="button" class="flex h-[39px] w-[97px] items-center gap-2 rounded-xs border-2 border-[#7b7b7b] pl-3.5"><svg class="size-[22px]"><use href="#i-feather"/></svg>Edit</button>
        <button type="button" class="flex h-[39px] w-[97px] items-center gap-1.5 rounded-xs border-2 border-[#7b7b7b] pl-[11px]"><svg class="size-[22px]"><use href="#i-layers"/></svg>Clone</button>
        <button type="button" class="flex h-[39px] w-[97px] items-center gap-2 rounded-xs border-2 border-[#7b7b7b] pl-[11px]"><svg class="h-[19px] w-[15px]"><use href="#i-bookmark"/></svg>Archive</button>
      </div>
    </div>
    <div class="mt-[18px] flex justify-between">
      <div>
        <p class="text-[16px] leading-6">High ASP Boost in Search</p>
        ${open ? `<div class="relative mt-[38px] grid grid-cols-[188px_188px_188px_10px]">${mark('04/27', 'Started')}${mark('05/03', 'Calculated')}${mark('05/08', 'Stopped')}${mark('', 'Complete', true)}<div class="absolute top-[18px] left-[387px] h-2 w-[187px] bg-[#d8d8d8]"></div><svg class="absolute top-3.5 left-[580px] size-4 text-[#999]"><use href="#i-help"/></svg></div>` : ''}
      </div>
      <div>
        <dl class="grid grid-cols-[97px_97px_97px_97px] gap-[11px] text-[16px] leading-[19px] text-[#808080]">
          <div><dt class="font-medium">Test Type</dt><dd>A/B Test</dd></div><div><dt class="font-medium">ID Type</dt><dd>PCID</dd></div><div><dt class="font-medium">Status</dt><dd>Stopped</dd></div><div><dt class="font-medium">Running</dt><dd>9 Days</dd></div>
        </dl>
        ${open ? `<div class="mt-5 flex gap-2"><div class="w-1.5 bg-[#7b7b7b]"><div class="h-7 bg-[#383838]"></div></div><div class="text-[#808080]">
          <div class="flex h-[29px] items-center gap-2"><svg class="h-[23px] w-5 text-[#999]"><use href="#i-android"/></svg><span class="-ml-1">≥ 4.3.2</span><span class="text-[26px] font-light">/</span><svg class="h-[23px] w-[19px] text-[#999]"><use href="#i-apple"/></svg><span class="-ml-1">≥ 4.1.0</span><span class="text-[26px] font-light">/</span><svg class="h-5 w-6 text-[#999]"><use href="#i-monitor"/></svg><span class="text-[26px] font-light">/</span><svg class="h-5 w-3 text-[#999]"><use href="#i-phone"/></svg></div>
          <div class="flex h-[26px] items-center gap-1">Infrastructure<span class="text-[26px] font-light">/</span>UX flow</div></div></div>` : ''}
      </div>
    </div>
    <div class="mt-auto flex h-8 justify-between">
      <nav class="grid text-[18px] leading-6 text-[#b0b0b0] ${open ? 'grid-cols-[124px_81px_109px_105px_107px_auto]' : 'grid-cols-[122px_79px_117px_103px_105px_auto]'}">${['Overview', 'Live', 'Results', 'Details', 'History', 'Notification'].map(tab).join('')}</nav>
      <button type="button" class="flex h-5 items-center gap-1.5 text-[13px] text-[#a4a4a4] ${open ? '' : 'mr-1.5'}">${open ? 'View Less' : 'View More'}<svg class="h-2 w-3.5 ${open ? 'rotate-180' : ''}"><use href="#i-chevron"/></svg></button>
    </div>
  </div>`;
});

/* Metric cards */
const dots = { g: 'bg-[#383838]', s: 'bg-[#7b7b7b]', p: 'bg-[#adadad]', n: 'bg-[#dcdcdc]' };
const metrics = [
  ['g', 'GMV', 'B', '+0.28%', '0.07%', '0.027'], ['s', 'BUYERS CONVERSION', 'B', '−0.08%', '0.03%', '0.019'],
  ['s', 'AOV PER CUSTOMER', 'D', '+0.5%', '0.016%', '0.026'], ['s', 'RETAIL GMV PER CUSTOMER', 'C', '+0.28%', '0.07%', '0.02'],
  ['s', 'GMV PER CUSTOMER', 'B', '−0.16%', '0.023%', '0.026'], ['p', 'BUYERS', 'C', '−0.06%', '0.01%', '0.034'],
  ['p', 'RATE OF SEARCHERS WITH CLICK', 'D', '−0.23%', '0.32%', '0.054'], ['n', 'RETAIL IMPRESSION RATE', 'D', '+0.05%', '0.03%', '0.19']];
each('[data-metrics]', (el) => {
  el.innerHTML = metrics.map(([d, name, g, v, e, p]) => `
  <div class="flex h-[115px] flex-col justify-between bg-[#f4f4f4] pt-[9px] pr-[13px] pb-3 pl-[11px] text-[13px] whitespace-nowrap">
    <div class="flex items-center gap-2"><i class="size-[9px] rounded-full ${dots[d]}"></i>${name}<b class="ml-auto text-[17px] font-medium">${g}</b></div>
    <div class="flex items-center justify-between"><span class="text-[24px] leading-[30px] font-light"><b class="font-medium">${v}</b> ± ${e}</span><svg class="h-[18px] w-[89px] shrink-0"><use href="#i-spark"/></svg></div>
    <div class="flex justify-between leading-4"><span>MDE:&nbsp; 2.4%</span><span>P: ${p}</span></div>
  </div>`).join('');
});

/* Comments */
const note = 'NA: 현재 SRP 하단에 검색결과는 없는 상태로 “이 상품을 검색한 다른 분들이 함께 본 상품” 이 노출되고 있으나, 휴대폰케이스<br>8개의 상품이 고정되어 표시되고 있음. 5개 이하인 경우 UI 확인 불가';
const reply = 'For PromtionEntity/PromotionItemEntity (maybe more, needs check), calling save should update create_date<br>and save a new record.';
$('#comments').innerHTML = [['L', 'Luke', '10mins ago', 'Rino', '3mins ago', 12, 'mt-3'], ['R', 'Rino', '2018-12-23 13:53:41', 'Luke', '2018-12-23 15:47:41', 5, 'mt-4']].map(([i, a, t, b, u, n, gap]) => `
  <article class="flex gap-4"><span class="mt-px flex size-[41px] shrink-0 items-center justify-center rounded-full bg-[#d8d8d8] text-[26px] font-light text-white">${i}</span>
    <div class="min-w-0 flex-1"><p class="text-[#aaa]"><b class="mr-2.5 font-medium text-[#383838]">${a} Commented</b>${t}</p>
      <p class="mt-1 text-[14px] leading-[19px] whitespace-nowrap text-[#808080]">${note}</p>
      <div class="${gap} mr-[50px] h-[60px] border-l-2 border-[#383838] pl-3"><div class="flex items-center text-[#aaa]"><b class="mr-2.5 font-medium text-[#383838]">${b} Replied</b>${u}
        <button type="button" class="ml-auto flex items-center gap-1.5 text-[13px] text-[#383838]">${n}<svg class="size-[15px] text-black"><use href="#i-chat"/></svg><svg class="ml-1 h-1.5 w-2.5 text-black"><use href="#i-chevron"/></svg></button></div>
        <p class="mt-1 leading-[18px] font-light whitespace-nowrap text-[#666]">${reply}</p></div>
      <button type="button" class="mt-2.5 flex items-center gap-2 text-[13px] leading-4"><svg class="size-4 text-black"><use href="#i-pencil"/></svg>Reply</button></div>
  </article>`).join('');

/* Create-test side hints */
const lorem = 'Lorem ipsum dolor sit amet, consectetur<br>adipiscing elit. Integer ultricies, dolor ut<br>aliquam gravida, felis ipsum cursus augue, ut<br>tempor ante arcu ut orci. Mauris accumsan<br>auctor pulvinar. Vestibulum ac enim iaculis,';
const hint = (t, cls) => `<section class="${cls}"><h5 class="flex items-center font-medium"><i class="mr-3.5 size-1 rounded-full bg-current"></i>${t}</h5><p class="mt-1 pl-[18px]">${lorem}</p></section>`;
$('#hints').innerHTML = hint('Test Type', 'mt-3.5 font-medium text-[#333]')
  + '<h4 class="mt-11 text-[18px] leading-6 font-medium">Test Plan Example</h4>'
  + hint('Background', 'mt-3.5') + hint('Background', 'mt-5') + hint('Impact', 'mt-6');

/* Live log rows */
const ids = { a: '7994069340261685941825', b: '6432214340261686770037', c: '1638836109180128972792' };
$('#log').innerHTML = [['a', 'D', 'Android', 15], ['b', 'A', 'iOS', 15], ['c', 'D', 'Mobile', 12], ['c', 'A', 'PC', 9], ['a', 'D', 'Android', 15], ['a', 'D', 'Android', 10], ['b', 'A', 'iOS', 17], ['c', 'D', 'iOS', 9], ['b', 'A', 'iOS', 17], ['c', 'D', 'iOS', 9]]
  .map(([i, g, p, n]) => `<tr class="h-[45px]"><td><b class="mr-2 font-medium">03/08</b>10:42:12 KST</td><td>${ids[i]}</td><td>${g}</td><td>Platform: “${p}” <span class="text-[#808080]">[ ${n} ]</span></td></tr>`).join('');

/* Supporting data set */
const cell = 'border-l border-dashed border-[#999] pr-5', last = 'border-l border-dashed border-[#999] pr-2';
$('#dataset').innerHTML = [['Exposed', 'h-[43px]', '1,433,813', '1,433,813', '1,301,732', '1,301,732'], ['Buyers', 'h-[45px]', '1,246,478', '1,246,478', '1,123,504', '1,123,504'], ['Non-<br>Buyers', 'h-[52px]', '187,335', '187,335', '178,228', '178,228'], ['Orders', 'h-[42px]', '320,115', '311,559', '299,997', '299,001'], ['Orders<br>per<br>Customer', 'h-[46px]', '0.3205', '0.3209', '0.2809', '0.2811']]
  .map(([l, h, ...v]) => `<tr class="align-top ${h}"><th scope="row" class="text-left text-[13px] leading-[15px] font-normal">${l}</th>${v.map((x, i) => `<td class="${i < 3 ? cell : last}">${x}</td>`).join('')}</tr>`).join('');

/* Traffic bars */
{
  const rows = [['android', 17, 20, 96, 297], ['apple', 18, 20, 80, 267], ['phone', 13, 22, 63, 181], ['monitor', 23, 19, 0, 157]];
  let s = '';
  for (let i = 0; i < 5; i++) s += `<path d="M${46 + i * 82.4} 0V190" stroke="#aaa" stroke-dasharray="5 4"/><text x="${47 + i * 82.4}" y="210" text-anchor="middle" font-size="13" fill="#b0b0b0">${['0', '0.5M', '1M', '1.5M', '2M'][i]}</text>`;
  rows.forEach(([n, w, h, d, l], i) => { const y = 22 + i * 46.7; s += `<use href="#i-${n}" x="${i === 3 ? 0 : 11 - w / 2}" y="${y + 7 - h / 2}" width="${w}" height="${h}" color="${i ? '#383838' : '#000'}"/><rect x="45" y="${y}" width="${l}" height="15" fill="#e0e0e0"/><rect x="45" y="${y}" width="${d}" height="15" fill="#383838"/>`; });
  $('#traffic').innerHTML = `<svg viewBox="0 0 390 214" class="block w-full overflow-visible" role="img" aria-label="Traffic by platform">${s}</svg>`;
}

/* Smooth curve through points */
const curve = (p) => { let d = `M${p[0]}`; for (let i = 0; i < p.length - 1; i++) { const a = p[i - 1] || p[i], b = p[i], c = p[i + 1], e = p[i + 2] || c; d += `C${b[0] + (c[0] - a[0]) / 8} ${b[1] + (c[1] - a[1]) / 8} ${c[0] - (e[0] - b[0]) / 8} ${c[1] - (e[1] - b[1]) / 8} ${c}`; } return d; };

/* Exposure area chart: x 0–427 across, y in units above the base line (281 = 10k) */
const layers = [
  ['#eeeeee', [[0, 131], [60, 139], [100, 143], [125, 145], [175, 165], [245, 189], [280, 193], [325, 206], [355, 213], [370, 219], [385, 227], [427, 263]]],
  ['#cdcdcd', [[0, 106], [60, 113], [100, 116], [145, 119], [175, 130], [225, 151], [275, 167], [325, 180], [355, 184], [385, 202], [427, 234]]],
  ['#7b7b7b', [[0, 82], [25, 91], [60, 94], [165, 94], [205, 102], [250, 125], [325, 152], [360, 158], [385, 172], [427, 204]]],
  ['#383838', [[0, 60], [55, 71], [85, 73], [125, 66], [170, 63], [195, 66], [210, 71], [250, 93], [305, 118], [330, 122], [375, 141], [407, 158], [427, 158]]]];
function exposure(el, { w, h, x0, x1, y0, step, k, ticks, first }) {
  let s = '';
  for (let i = 0; i < 6; i++) s += `<text x="${x0 - 8}" y="${y0 - i * step + 4}" text-anchor="end" font-size="12" fill="#b0b0b0">${i ? i * 2 + 'k' : '0'}</text>` + (i ? `<path d="M${x0} ${y0 - i * step}H${x1}" stroke="#dcdcdc" stroke-width="1.500"/>` : '');
  layers.forEach(([c, p]) => { s += `<path fill="${c}" d="${curve(p.map(([x, y]) => [x0 + x * (x1 - x0) / 427, y0 - y * k]))}L${x1} ${y0}L${x0} ${y0}Z"/>`; });
  ticks.forEach((x, i) => { s += `<path d="M${x} ${y0}v6" stroke="#555"/><text x="${x}" y="${y0 + 22}" text-anchor="middle" font-size="11" fill="#383838">${[first, '1:45PM', '2:45PM', '3:45PM', '4:45PM', '5:45PM'][i]}</text>`; });
  $(el).innerHTML = `<svg viewBox="0 0 ${w} ${h}" class="block w-full overflow-visible" role="img" aria-label="Exposure logs">${s}</svg>`;
}
exposure('#chart-overview', { w: 394, h: 212, x0: 25, x1: 392, y0: 189, step: 33, k: .586, ticks: [45, 109, 175, 239, 304, 369], first: '12:45PM' });
exposure('#chart-live', { w: 420, h: 256, x0: 25, x1: 420, y0: 227, step: 37.800, k: .734, ticks: [56, 120, 186, 250, 316, 381], first: '12:45AM' });

/* Cumulative and daily charts */
{
  const X = (x) => +((x - 69) * .86).toFixed(1), Y = (y) => +((y - 405) * .5766).toFixed(1);
  const pts = (t) => t.trim().split(/\s+/).map((p) => p.split(',').map(Number)).map(([x, y]) => [X(x), Y(y)]);
  const line = (t, c, extra = '') => `<polyline points="${pts(t).join(' ')}" fill="none" stroke="${c}" stroke-width="1.400" ${extra}/>`;
  const text = (x, y, t, o = '') => `<text x="${X(x)}" y="${Y(y)}" font-size="11" ${o}>${t}</text>`;
  const ticks = [142, 227, 313, 399, 486, 572, 657, 744, 829, 915, 1001, 1087, 1174, 1259];
  const days = ['04/29', '04/30', '05/01', '05/02', '05/03', '05/04', '05/05', '05/06', '05/07', '05/08', '05/09', '05/10', '05/11', '05/12'];
  const hill = '122,843 135,847 156,854 210,842 233,841 262,854 315,838 400,832 450,838 500,833 528,826 570,838 605,832 655,846 690,841 740,824 820,815 862,808 948,820 975,826 1048,815 1115,822 1180,813 1278,803';
  const frame = (dy, labels, right) => {
    let s = `<path fill="#e8e8e8" d="${curve(pts(hill).map(([x, y]) => [x, y + dy * .5766]))}L${X(1278)} ${Y(891 + dy)}L${X(122)} ${Y(891 + dy)}Z"/>`;
    labels.forEach((l, i) => { const y = 464 + i * 107 + dy; s += text(103, y + 7, l, 'text-anchor="end" fill="#aaa"'); if (i < 4) s += `<path d="M${X(114)} ${Y(y)}H${X(1293)}" stroke="#dedede" stroke-width="1.500"/>`; });
    right.forEach((y, i) => { s += `<path d="M${X(1297)} ${Y(y)}h4" stroke="#999"/>` + text(1307, y + 7, ['1', '0.8', '0.6', '0.4', '0.2', '0'][i], 'fill="#aaa"'); });
    return s + `<path d="M${X(1299)} ${Y(464 + dy)}V${Y(891 + dy)}" stroke="#ccc" stroke-dasharray="1 11"/>`;
  };
  const axis = (dy) => `<path d="M${X(114)} ${Y(891 + dy)}H${X(1293)}" stroke="#383838" stroke-width="2.500"/>` + ticks.map((x) => `<path d="M${X(x)} ${Y(891 + dy)}v7" stroke="#555"/>`).join('');
  const key = (y, l, c, dash) => text(1377, y, l, 'fill="#888"') + `<path d="M${X(1476)} ${Y(y - 7)}H${X(1499)}" stroke="${c}" stroke-width="2" ${dash ? 'stroke-dasharray="3 2"' : ''}/><circle cx="${X(1487.5)}" cy="${Y(y - 7)}" r="2.500" fill="${c}"/>`;
  const dot = (y) => `<circle cx="${X(657)}" cy="${Y(y)}" r="2.800" fill="#383838"/>`;
  const bold = 'font-weight="500" fill="#383838"';
  $('#chart-data').innerHTML = `<svg viewBox="0 0 1235 650" class="block w-full overflow-visible" role="img" aria-label="Cumulative and daily buyer conversion">`
    + text(69, 433, 'Cummulative', bold) + frame(0, ['6.70%', '3.35%', '0.000%', '−3.35%', '−6.70%'], [464, 547, 634, 720, 805, 891])
    + `<path d="M${X(657)} ${Y(464)}V${Y(1456)}" stroke="#bbb"/>`
    + line('121,480 139,470 164,495 188,541 210,585 227,620 244,558 262,640 280,700 298,718 313,773 325,773 338,738 350,727 370,788 384,713 401,700 423,559 440,600 457,665 472,758 488,788 502,765 511,702 523,702 532,745 547,773 562,773 573,747 598,747 621,757 635,738 664,726 697,736 948,712 975,712 1010,726 1018,737 1048,661 1062,661 1079,718 1113,625 1140,672 1158,660 1180,682 1215,645 1245,661 1278,674', '#aaa', 'stroke-dasharray="2 2"')
    + line('121,488 142,600 152,645 168,750 183,691 199,761 227,623 250,672 278,623 290,632 307,597 340,586 357,516 373,546 396,506 415,497 428,524 459,623 474,586 490,612 522,546 531,508 544,572 550,545 569,597 589,545 607,612 621,572 645,632 671,597 697,650 948,634 967,586 1005,670 1025,715 1062,670 1085,702 1110,666 1135,675 1158,692 1173,641 1192,680 1222,672 1273,681', '#383838', 'stroke-dasharray="2 2"')
    + line('126,881 136,615 146,700 152,640 158,680 165,630 166,690 175,655 186,663 218,641 251,691 290,663 362,641 380,654 423,654 467,641 498,654 564,647 610,663 650,654 668,641 697,648 948,660 1001,653 1048,641 1085,641 1120,654 1155,663 1247,653 1278,653', '#a6a6a6')
    + line('125,560 142,776 142,700 147,727 152,623 156,697 161,641 168,665 176,700 183,623 201,662 224,674 240,661 275,674 342,674 365,689 401,689 423,700 475,674 520,674 554,689 587,689 620,674 653,683 692,674 948,698 970,689 1001,689 1028,700 1085,700 1120,709 1152,709 1208,727 1278,727', '#383838')
    + dot(616) + dot(645) + dot(682) + dot(727) + axis(0)
    + text(1377, 447, 'Click to show / hide :', bold) + key(483, 'B–A', '#383838') + key(515, 'C–A', '#a6a6a6') + key(547, 'B (p-values)', '#555', 1) + key(579, 'C (p-values)', '#a6a6a6', 1)
    + text(69, 989, 'Daily', bold) + frame(555, ['0.170', '0.141', '0.111', '0.0822', '0.0529'], [1019, 1103, 1190, 1276, 1361, 1446])
    + line('122,1265 142,1138 163,1405 177,1395 184,1280 212,1205 240,1090 255,1290 271,1330 284,1208 299,1182 317,1045 329,1231 342,1202 353,1100 371,1060 386,1060 412,1312 428,1270 455,1125 475,1085 492,1022 511,1302 530,1342 549,1160 573,1120 586,1088 605,1270 617,1368 628,1350 645,1190 657,1142 675,1142 695,1258 731,1083 747,1090 757,1180 765,1312 781,1328 813,1083 833,1070 848,1255 865,1283 886,1275 892,1160 912,1120 933,1035 946,1048 946,1140 968,1255 974,1320 992,1350 997,1197 1034,1092 1048,1140 1058,1222 1067,1243 1078,1325 1097,1375 1110,1270 1137,1175 1153,1142 1160,1210 1185,1300 1192,1350 1214,1370 1224,1232 1261,1142 1278,1230', '#ccc')
    + line('122,1272 142,1143 163,1405 177,1395 188,1290 214,1200 241,1105 255,1295 271,1332 284,1212 299,1190 317,1050 326,1155 342,1200 353,1105 371,1060 388,1012 412,1312 430,1295 455,1140 489,1045 511,1310 530,1345 557,1168 586,1097 607,1345 617,1370 628,1350 650,1190 659,1165 675,1143 693,1300 731,1083 745,1098 765,1280 781,1326 820,1090 833,1068 852,1240 865,1278 886,1280 896,1185 933,1045 946,1061 963,1275 974,1322 992,1350 1004,1210 1034,1095 1050,1160 1065,1280 1078,1330 1099,1369 1110,1290 1137,1180 1152,1160 1181,1325 1192,1352 1214,1372 1230,1240 1242,1190 1261,1160 1278,1234', '#aaa')
    + line('122,1280 142,1155 163,1417 177,1407 190,1303 216,1213 241,1119 255,1304 271,1332 284,1221 299,1198 317,1061 326,1174 342,1209 353,1117 371,1079 387,1027 412,1305 430,1305 455,1147 489,1061 511,1316 530,1347 557,1181 573,1142 586,1104 607,1358 617,1378 628,1389 650,1210 657,1176 675,1156 693,1316 730,1096 745,1103 753,1130 765,1286 781,1326 820,1103 833,1096 852,1245 865,1280 886,1280 896,1200 933,1048 946,1061 946,1120 963,1288 974,1326 992,1358 1004,1221 1012,1170 1034,1105 1048,1165 1065,1290 1078,1332 1099,1369 1137,1200 1152,1175 1179,1346 1214,1378 1242,1210 1261,1181 1278,1244', '#383838')
    + dot(1142) + dot(1175) + axis(555)
    + ticks.map((x, i) => text(x, 1487, days[i], 'text-anchor="middle" fill="#555"')).join('')
    + text(1377, 1002, 'Click to show / hide :', bold) + key(1036, 'A', '#383838') + key(1068, 'B', '#a6a6a6') + key(1100, 'C', '#dcdcdc')
    + '</svg>';
}
</script>
</body>
</html>
